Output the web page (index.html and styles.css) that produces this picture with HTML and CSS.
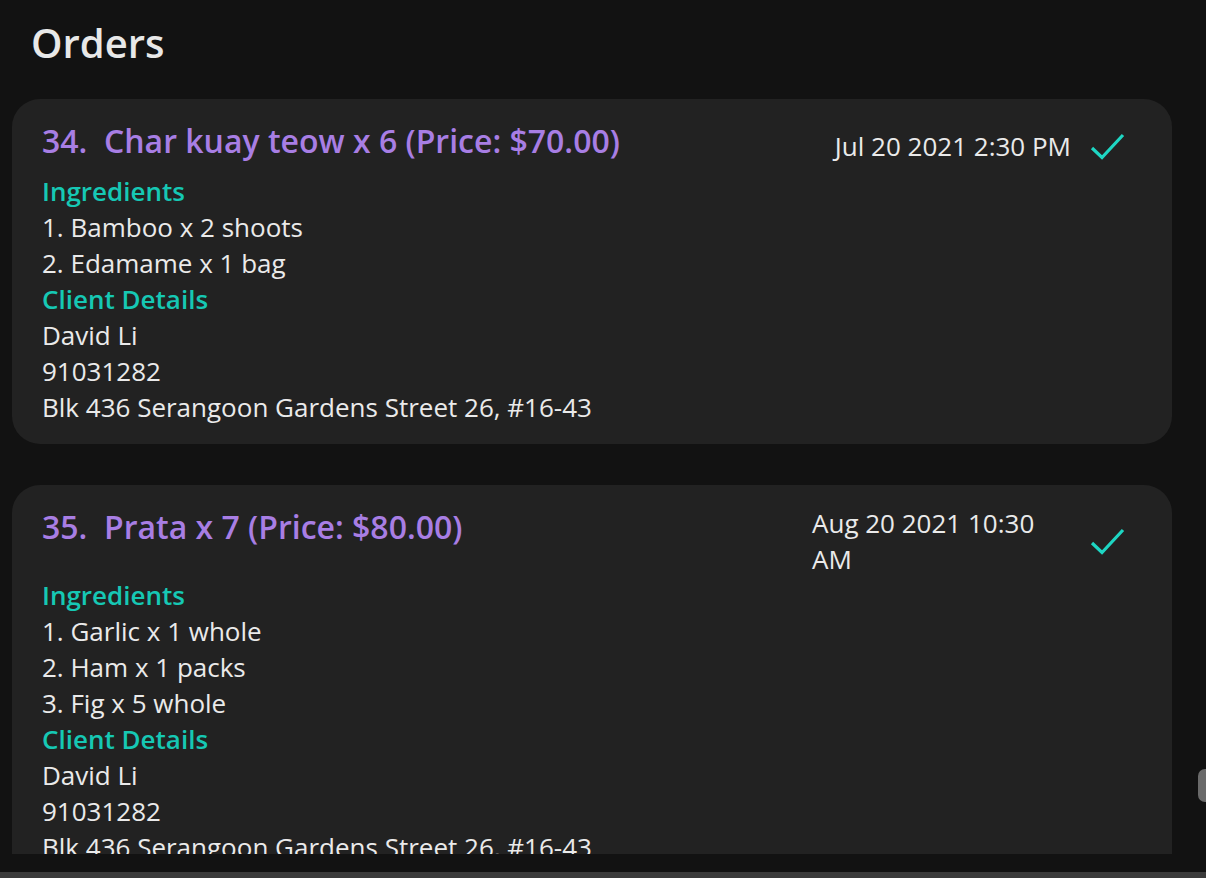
FILE: index.html
```html
<!DOCTYPE html>
<html lang="en">
<head>
<meta charset="utf-8">
<title>Orders</title>
<link rel="stylesheet" href="styles.css">
</head>
<body>
<div class="app">
  <h1 class="page-title">Orders</h1>
  <div class="list">
    <div class="card">
      <div class="card-head">
        <div class="order-title">34.&nbsp; Char kuay teow x 6 (Price: $70.00)</div>
        <div class="meta">
          <div class="date">Jul 20 2021 2:30 PM</div>
          <div class="done-btn">
            <svg width="40" height="32" viewBox="0 0 40 32"><polyline points="5,18 15,27.5 36,5" fill="none" stroke="#1ed6c3" stroke-width="3.2"/></svg>
          </div>
        </div>
      </div>
      <div class="section">Ingredients</div>
      <div class="line">1. Bamboo x 2 shoots</div>
      <div class="line">2. Edamame x 1 bag</div>
      <div class="section">Client Details</div>
      <div class="line">David Li</div>
      <div class="line">91031282</div>
      <div class="line">Blk 436 Serangoon Gardens Street 26, #16-43</div>
    </div>
    <div class="card">
      <div class="card-head">
        <div class="order-title">35.&nbsp; Prata x 7 (Price: $80.00)</div>
        <div class="meta">
          <div class="date">Aug 20 2021 10:30 AM</div>
          <div class="done-btn">
            <svg width="40" height="32" viewBox="0 0 40 32"><polyline points="5,18 15,27.5 36,5" fill="none" stroke="#1ed6c3" stroke-width="3.2"/></svg>
          </div>
        </div>
      </div>
      <div class="section">Ingredients</div>
      <div class="line">1. Garlic x 1 whole</div>
      <div class="line">2. Ham x 1 packs</div>
      <div class="line">3. Fig x 5 whole</div>
      <div class="section">Client Details</div>
      <div class="line">David Li</div>
      <div class="line">91031282</div>
      <div class="line">Blk 436 Serangoon Gardens Street 26, #16-43</div>
    </div>
  </div>
  <div class="bottom-gap"></div>
  <div class="bottom-bar"></div>
  <div class="scroll-thumb"></div>
</div>
</body>
</html>
```

FILE: styles.css
```css
* { box-sizing: border-box; }
html, body {
  margin: 0;
  padding: 0;
  background: #121212;
  height: 878px;
  overflow: hidden;
}
body {
  font-family: "Open Sans", "Noto Sans", sans-serif;
  color: #e9e9e9;
}
.app {
  position: relative;
  height: 878px;
  display: flex;
  flex-direction: column;
}
.page-title {
  margin: 0;
  padding: 15px 0 0 31px;
  height: 99px;
  flex: none;
  font-size: 40px;
  font-weight: 600;
  line-height: 55px;
  color: #e8e8e8;
}
.list {
  height: 755px;
  flex: none;
  overflow: hidden;
  padding: 0 34px 0 12px;
  border-bottom-right-radius: 4px;
}
.card {
  background: #222222;
  border-radius: 28px;
  padding: 20px 28px 19px 30px;
  margin-bottom: 41px;
}
.card-head {
  display: flex;
  align-items: flex-start;
}
.order-title {
  flex: 1;
  font-size: 32px;
  font-weight: 600;
  color: #a87ee4;
  line-height: 44px;
}
.meta {
  display: flex;
  align-items: center;
  gap: 10px;
  margin-right: 11px;
}
.date {
  max-width: 259px;
  font-size: 26px;
  line-height: 36px;
  color: #eaeaea;
}
.done-btn {
  width: 52px;
  height: 54px;
  flex: none;
  display: flex;
  align-items: center;
  justify-content: center;
}
.section {
  font-size: 26px;
  line-height: 36px;
  font-weight: 600;
  color: #16c8b4;
}
.line {
  font-size: 26px;
  line-height: 36px;
  color: #eaeaea;
}
.bottom-gap {
  height: 18px;
  flex: none;
}
.bottom-bar {
  height: 6px;
  flex: none;
  background: #3b3b3b;
}
.scroll-thumb {
  position: absolute;
  left: 1198px;
  top: 769px;
  width: 14px;
  height: 33px;
  border-radius: 7px;
  background: #6a6a6a;
}
```
